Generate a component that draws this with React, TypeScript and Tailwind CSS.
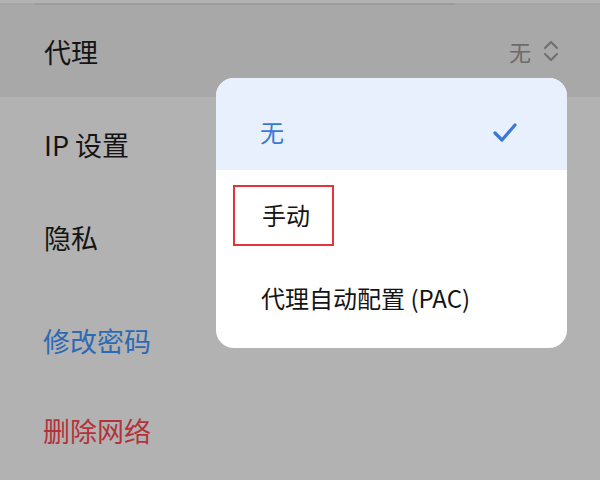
import React from "react";

const font = { fontFamily: '"Noto Sans CJK SC", "Noto Sans", sans-serif' };

export default function App() {
  return (
    <div
      className="relative w-[600px] h-[480px] overflow-hidden bg-[#b2b2b2] text-[#141414]"
      style={font}
    >
      {/* top edge */}
      <div className="h-[3px] bg-[#b3b3b3]" />
      <div className="h-[2px] bg-[#a4a4a4] px-[35px]">
        <div className="h-full mr-[110px] bg-[#9c9c9c]" />
      </div>

      {/* row: 代理 (pressed) */}
      <div className="h-[92px] bg-[#a8a8a8] flex items-center justify-between pl-[44px] pr-[41px]">
        <span className="text-[27px] leading-none">代理</span>
        <div className="flex items-center gap-[12px] text-[#6b6b6b]">
          <span className="text-[22px] leading-none">无</span>
          <svg width="16" height="22" viewBox="0 0 16 22" fill="none" stroke="#6e6e6e" strokeWidth="2" strokeLinecap="round" strokeLinejoin="round">
            <path d="M2 8 L8 2 L14 8" />
            <path d="M2 14 L8 20 L14 14" />
          </svg>
        </div>
      </div>

      <div className="h-[94px] flex items-center pl-[44px]">
        <span className="text-[27px] leading-none">IP 设置</span>
      </div>
      <div className="h-[92px] flex items-center pl-[44px]">
        <span className="text-[27px] leading-none">隐私</span>
      </div>
      <div className="h-[114px] flex items-center pl-[43px]">
        <span className="text-[27px] leading-none text-[#2d6ab5]">修改密码</span>
      </div>
      <div className="h-[66px] flex items-center pl-[43px]">
        <span className="text-[27px] leading-none text-[#b3323b]">删除网络</span>
      </div>

      {/* dropdown popup */}
      <div className="absolute left-[216px] top-[78px] w-[351px] h-[270px] rounded-[18px] bg-white overflow-hidden flex flex-col">
        <div className="h-[92px] shrink-0 bg-[#e8f0fd] flex items-center justify-between pl-[44px] pr-[50px] pt-[16px]">
          <span className="text-[24px] leading-none text-[#3a78d6]">无</span>
          <svg className="mt-[2px]" width="24" height="20" viewBox="0 0 24 20" fill="none" stroke="#3a78d6" strokeWidth="3.2" strokeLinecap="round" strokeLinejoin="round">
            <path d="M2 10 L9 17 L22 2" />
          </svg>
        </div>
        <div className="h-[90px] shrink-0 flex items-center pl-[17px]">
          <div className="w-[101px] h-[61px] border-2 border-[#e3343b] flex items-center pl-[27px]">
            <span className="text-[24px] leading-none">手动</span>
          </div>
        </div>
        <div className="h-[76px] shrink-0 flex items-center pl-[45px]">
          <span className="text-[24px] leading-none">代理自动配置 (PAC)</span>
        </div>
      </div>
    </div>
  );
}
